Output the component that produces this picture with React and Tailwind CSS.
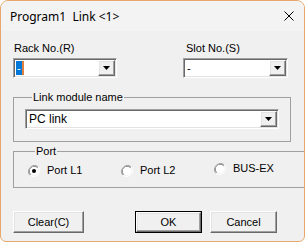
import React from 'react';

const sunken =
  'border border-t-[#a0a0a0] border-l-[#a0a0a0] border-r-white border-b-white shadow-[inset_1px_1px_0_#696969,inset_-1px_-1px_0_#e3e3e3]';
const raised =
  'border border-t-white border-l-white border-r-[#696969] border-b-[#696969] shadow-[inset_-1px_-1px_0_#a0a0a0,inset_1px_1px_0_#e3e3e3]';

const Arrow = () => (
  <svg width="7" height="4" viewBox="0 0 7 4">
    <path d="M0 0h7L3.5 4z" fill="#000" />
  </svg>
);

const Combo = ({ width, children }) => (
  <div className={`${sunken} flex h-[20px] bg-white`} style={{ width }}>
    <div className="flex min-w-0 flex-1 items-center pl-[2px]">{children}</div>
    <div className={`${raised} m-[1px] flex w-[17px] items-center justify-center bg-[#f0f0f0]`}>
      <Arrow />
    </div>
  </div>
);

const Radio = ({ checked, label, className = '' }) => (
  <div className={`flex w-[93px] items-center gap-[7px] ${className}`}>
    <svg width="12" height="12" viewBox="0 0 12 12">
      <path d="M10.2 1.8A6 6 0 0 0 1.8 10.2" fill="none" stroke="#a0a0a0" strokeWidth="1" />
      <path d="M9.5 2.5A5 5 0 0 0 2.5 9.5" fill="none" stroke="#696969" strokeWidth="1" />
      <path d="M1.8 10.2A6 6 0 0 0 10.2 1.8" fill="none" stroke="#fff" strokeWidth="1" />
      <circle cx="6" cy="6" r="4.3" fill="#fff" />
      {checked && <circle cx="6" cy="6" r="2" fill="#000" />}
    </svg>
    <span>{label}</span>
  </div>
);

const Button = ({ children, width, isDefault }) => (
  <button
    className={`flex h-[22px] items-center justify-center bg-[#f0f0f0] ${
      isDefault ? 'border border-[#000] p-0' : ''
    }`}
    style={{ width }}
  >
    <span className={`${raised} flex h-full w-full items-center justify-center`}>{children}</span>
  </button>
);

const App = () => {
  return (
    <div className="h-[242px] w-[305px] overflow-hidden rounded-t-[8px] rounded-b-[6px] border border-[#e9a86b] bg-[#f0f0f0] font-['Liberation_Sans',Arial,sans-serif] text-[11px] leading-[13px] text-black">
      {/* title bar */}
      <div className="flex h-[30px] items-center justify-between bg-[#f3f3f3] pl-[9px] pr-[10px] font-['Noto_Sans',sans-serif] text-[12px]">
        <span className="whitespace-pre">Program1  Link &lt;1&gt;</span>
        <svg width="10" height="10" viewBox="0 0 10 10">
          <path d="M0.5 0.5l9 9M9.5 0.5l-9 9" stroke="#000" strokeWidth="1" />
        </svg>
      </div>

      <div className="px-[12px] pt-[11px]">
        {/* rack / slot */}
        <div className="flex">
          <div className="w-[104px]">
            <div className="mb-[3px] pl-[1px]">Rack No.(R)</div>
            <Combo width="104px">
              <span className="flex h-[14px] items-center border-r-2 border-[#e08040] bg-[#0078d7] px-[1px] text-white">-</span>
            </Combo>
          </div>
          <div className="ml-[66px] w-[105px]">
            <div className="mb-[3px] pl-[3px]">Slot No.(S)</div>
            <Combo width="105px">
              <span className="pl-[1px]">-</span>
            </Combo>
          </div>
        </div>

        {/* link module */}
        <fieldset className="mt-[13px] w-[274px] border border-[#a0a0a0] px-[11px] pb-[12px] pt-[5px]">
          <legend className="ml-[7px] px-[1px]">Link module name</legend>
          <Combo width="254px">
            <span className="pl-[1px] text-[12px]">PC link</span>
          </Combo>
        </fieldset>

        {/* port */}
        <fieldset className="mt-[3px] w-[274px] border border-[#a0a0a0] pb-[10px] pl-[14px] pt-[6px]">
          <legend className="ml-[7px] px-[1px]">Port</legend>
          <div className="flex items-center">
            <Radio checked label="Port L1" />
            <Radio label="Port L2" />
            <Radio label="BUS-EX" className="-mt-[4px]" />
          </div>
        </fieldset>

        {/* buttons */}
        <div className="mt-[23px] flex">
          <Button width="71px">Clear(C)</Button>
          <div className="ml-[51px]">
            <Button width="67px" isDefault>OK</Button>
          </div>
          <div className="ml-[8px]">
            <Button width="67px">Cancel</Button>
          </div>
        </div>
      </div>
    </div>
  );
};

export default App;
